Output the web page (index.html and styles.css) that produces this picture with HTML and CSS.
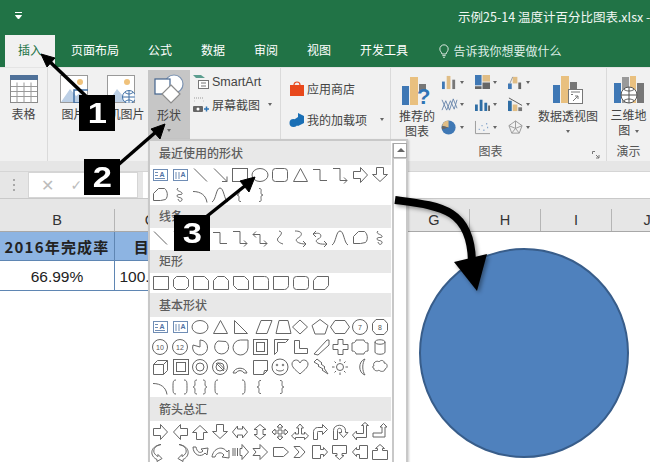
FILE: index.html
```html
<!DOCTYPE html>
<html lang="zh-CN">
<head>
<meta charset="utf-8">
<title>示例25-14 温度计百分比图表.xlsx</title>
<link rel="stylesheet" href="styles.css">
</head>
<body>
<svg class="defs" width="0" height="0">
<defs>
<g id="tb"><rect x="3.5" y="4.5" width="14" height="11" class="bl"/><text x="12" y="12" class="mini">A</text><path d="M5 7.500h3M5 10.500h3M5 13.500h10" class="bl"/></g>
<g id="vtb"><rect x="3.5" y="4.5" width="14" height="11" class="bl"/><text x="13" y="12" class="mini">A</text><path d="M6 7v7M9 7v7" class="bl"/></g>
<path id="ln" d="M4 3.500L17 16.500"/>
<path id="lna" d="M4 3.500L17 16.500M12 16.500h5v-5"/>
<path id="elb" d="M3 4.500h7v11h7"/>
<path id="elba" d="M3 3.500h7v12h7M14 12.500l3 3l-3 3"/>
<path id="elbb" d="M3 6.500h7v9h7M14 12.500l3 3l-3 3M6 3.500l-3 3l3 3"/>
<path id="cv" d="M9 3c5 1 1 5 -1 7c-2 3 2 5 5 6"/>
<path id="cva" d="M5 3c9 0 7 5 3 7c-4 2 -1 6 8 6M13 13l3 3l-3 3"/>
<path id="cvb" d="M3 6c10 -3 9 4 5 5c-4 2 -1 6 9 5M14 13l3 3l-3 3M6 3l-3 3l3 3"/>
<path id="bump" d="M2 17c4 -2 4 -14 8 -14c4 0 4 12 8 14"/>
<path id="free" d="M3.500 15.500v-7l5 -5h6c3 2 4 8 1 11l-5 1z"/>
<path id="scr" d="M8 3c-3 3 3 3 4 5c1 3 -5 0 -5 3c0 2 6 1 5 4c-1 2 -3 2 -4 -1"/>
<rect id="rc" x="3.500" y="3.500" width="15" height="13"/>
<ellipse id="el" cx="10" cy="10" rx="8" ry="6.500"/>
<rect id="rr" x="3.500" y="3.500" width="15" height="13" rx="3"/>
<path id="tri" d="M10.500 3.500L17.500 16.500H3.500z"/>
<path id="ra" d="M3.500 6.500h7v-4l7 7.500l-7 7.500v-4h-7z"/>
<path id="la" d="M17.500 6.500h-7v-4l-7 7.500l7 7.500v-4h7z"/>
<path id="ua" d="M6.500 17.500v-7h-4l7.500 -7l7.500 7h-4v7z"/>
<path id="da" d="M6.500 2.500v7h-4l7.500 7l7.500 -7h-4v-7z"/>
<path id="lbr" d="M11 3.500c-3 0 -2 1.500 -2 4c0 2 -1 2.500 -2 2.500c1 0 2 .5 2 2.500c0 2.500 -1 4 2 4"/>
<path id="rbr" d="M9 3.500c3 0 2 1.500 2 4c0 2 1 2.500 2 2.500c-1 0 -2 .5 -2 2.500c0 2.500 1 4 -2 4"/>
<path id="carc" d="M3 6.500c8 0 13 4 14 11"/>
<path id="r1" d="M3.500 3.500h15v13h-15z"/>
<path id="r2" d="M6.500 3.500h9l3 3v7l-3 3h-9l-3 -3v-7z"/>
<path id="r3" d="M3.500 3.500h11l4 4v9h-15z"/>
<path id="r4" d="M7.500 3.500h7l4 4v9h-15v-9z"/>
<path id="r5" d="M3.500 3.500h11l4 4v9h-11l-4 -4z"/>
<path id="r6" d="M3.500 3.500h11c3 0 4 2 4 4v9h-15z"/>
<path id="r7" d="M3.500 3.500h15v9c0 2 -2 4 -4 4h-11z"/>
<path id="r9" d="M7 3.500h11.500v9l-3.500 4h-11.500v-9z"/>
</defs>
</svg>

<div class="page">
  <header class="titlebar">
    <svg class="qat" viewBox="0 0 10 10"><path d="M1 1.500h7M1.500 4.500h6l-3 3.500z" class="qatp"/></svg>
    <span class="doc">示例25-14 温度计百分比图表.xlsx -</span>
  </header>

  <nav class="tabs">
    <span class="tab active">插入</span>
    <span class="tab">页面布局</span>
    <span class="tab">公式</span>
    <span class="tab">数据</span>
    <span class="tab">审阅</span>
    <span class="tab">视图</span>
    <span class="tab">开发工具</span>
    <span class="tell">
      <svg class="bulb" viewBox="0 0 12 16"><path d="M3.500 11c0-2-2.500-3-2.500-6a5 5 0 0 1 10 0c0 3-2.500 4-2.500 6zM4 13h4M5 15h2"/></svg>
      告诉我你想要做什么
    </span>
  </nav>

  <section class="ribbon">
    <div class="grp g-table">
      <div class="big">
        <svg class="ic28" viewBox="0 0 28 28">
          <rect x=".5" y=".5" width="27" height="27" fill="#fff" stroke="#8a8a8a"/>
          <rect x="0" y="0" width="28" height="5" fill="#4f7199"/>
          <path d="M7 7.500v20M14 7.500v20M21 7.500v20M1 11.500h26M1 16.500h26M1 21.500h26" stroke="#9a9a9a" fill="none"/>
        </svg>
        <span class="lbl">表格</span>
      </div>
    </div>
    <div class="grp g-pics">
      <div class="big pic">
        <svg class="ic28" viewBox="0 0 28 28">
          <rect x=".5" y=".5" width="27" height="27" fill="#fff" stroke="#9a9a9a"/>
          <circle cx="20" cy="7" r="3" fill="#f0c27b"/>
          <path d="M1 27l9-13l6 7l4-3l7 9z" fill="#bdd0e6"/>
          <rect x="14" y="15" width="16" height="13" fill="none" stroke="#3f6fa5" stroke-width="1.500"/>
        </svg>
        <span class="lbl">图片</span>
      </div>
      <div class="big pic">
        <svg class="ic28" viewBox="0 0 28 28">
          <rect x=".5" y=".5" width="27" height="27" fill="#fff" stroke="#9a9a9a"/>
          <circle cx="20" cy="7" r="3" fill="#f0c27b"/>
          <path d="M1 27l9-13l6 7l4-3l7 9z" fill="#bdd0e6"/>
          <circle cx="22" cy="22" r="6.500" fill="#fff" stroke="#3f6fa5"/>
          <path d="M15.500 22h13M22 15.500v13M18 17.500c3 2 5 2 8 0M18 26.500c3-2 5-2 8 0" fill="none" stroke="#3f6fa5"/>
        </svg>
        <span class="lbl">联机图片</span>
      </div>
    </div>
    <div class="grp g-shape">
      <div class="big">
        <svg class="ic30" viewBox="0 0 30 30">
          <circle cx="20" cy="10" r="9" fill="#fff" stroke="#7c93b2" stroke-width="1.200"/>
          <rect x="1" y="5" width="15" height="15" fill="#fff" stroke="#44648e" stroke-width="1.200"/>
          <path d="M17 11l9 9l-9 9l-9-9z" fill="#fff" stroke="#8c8c8c" stroke-width="1.200"/>
        </svg>
        <span class="lbl">形状</span>
        <span class="caret"></span>
      </div>
    </div>
    <div class="grp g-smart">
      <div class="line">
        <svg class="ic16" viewBox="0 0 16 16"><path d="M0 1h8l4 3H3z" fill="#5c9e8f"/><rect x="5.500" y="6.500" width="10" height="8" fill="#fff" stroke="#777"/><path d="M8 9h5M8 12h5" stroke="#777"/></svg>
        <span class="lbl en">SmartArt</span>
      </div>
      <div class="line">
        <svg class="ic16" viewBox="0 0 16 16"><path d="M1 1h9M1 4h.5M10 4h.5" stroke="#999" stroke-dasharray="1 1"/><rect x="0" y="9" width="10" height="6" rx="1" fill="#666"/><circle cx="5" cy="12" r="1.500" fill="#fff"/><path d="M11 12h5M13.500 9.500v5" stroke="#2f75b5" stroke-width="1.500"/></svg>
        <span class="lbl">屏幕截图</span>
        <span class="caret side"></span>
      </div>
    </div>
    <div class="grp g-add">
      <div class="line">
        <svg class="ic16" viewBox="0 0 16 16"><path d="M1 4h14v11H1z" fill="#e8481c"/><path d="M5 4c0-4 6-4 6 0" fill="none" stroke="#e8481c" stroke-width="1.200"/></svg>
        <span class="lbl">应用商店</span>
      </div>
      <div class="line">
        <svg class="ic16" viewBox="0 0 16 16"><path d="M9 1l6 3v7l-6 3l-3-1.500V7L9 5z" fill="#1a6fb5"/><circle cx="4.500" cy="11" r="4" fill="#1a6fb5"/></svg>
        <span class="lbl">我的加载项</span>
        <span class="caret side wide"></span>
      </div>
    </div>
    <div class="grp g-chart">
      <div class="chartrow">
        <div class="big rec">
          <svg class="ic30" viewBox="0 0 30 30">
            <rect x="0" y="10" width="7" height="19" fill="#3f78b5"/>
            <rect x="8" y="1" width="8" height="28" fill="#e9c07f"/>
            <rect x="17" y="8" width="7" height="7" fill="#777"/>
            <text x="15" y="28" class="qm">?</text>
          </svg>
          <span class="lbl two">推荐的<br>图表</span>
        </div>
        <div class="minis">
          <span class="m"><svg viewBox="0 0 18 16"><path d="M1 7h3v8H1z" fill="#3f78b5"/><path d="M6 1h4v14H6z" fill="#e0bd85"/><path d="M12 5h3v10h-3z" fill="#777"/></svg><i class="caret"></i></span>
          <span class="m"><svg viewBox="0 0 18 16"><path d="M1 0h7v11H1z" fill="#3f78b5"/><path d="M9 0h8v7H9z" fill="#e0bd85"/><path d="M9 8h8v7H9zM1 12h7v3H1z" fill="#666"/></svg><i class="caret"></i></span>
          <span class="m"><svg viewBox="0 0 18 16"><path d="M1 9h4v6H1z" fill="#3f78b5"/><path d="M6 2h5v7H6z" fill="#e0bd85"/><path d="M12 8h3v7h-3z" fill="#666"/><path d="M3 9l3-7" stroke="#999"/></svg><i class="caret"></i></span>
          <span class="m"><svg viewBox="0 0 18 16"><path d="M1 14l4-10l4 10l4-12l4 10M1 3l5 11l4-10l4 9l3-10" fill="none" stroke="#6b88ad"/></svg><i class="caret"></i></span>
          <span class="m"><svg viewBox="0 0 18 16"><path d="M1 8h3v7H1zM6 3h3v12H6zM11 6h3v9h-3z" fill="#2f6ea5"/><path d="M15 9h2v6h-2z" fill="#666"/></svg><i class="caret"></i></span>
          <span class="m"><svg viewBox="0 0 18 16"><path d="M1 4h4v11H1z" fill="#2f6ea5"/><path d="M6 8h5v7H6z" fill="#e0bd85"/><path d="M12 11h4v4h-4z" fill="#777"/><path d="M2 1l14 8" stroke="#555"/></svg><i class="caret"></i></span>
          <span class="m"><svg viewBox="0 0 18 16"><circle cx="8" cy="8" r="7.500" fill="#3f78b5"/><path d="M8 8V.5A7.500 7.500 0 0 0 1 6z" fill="#e0bd85"/><path d="M8 8L1 6a7.500 7.500 0 0 0 0 4z" fill="#666"/></svg><i class="caret"></i></span>
          <span class="m"><svg viewBox="0 0 18 16"><path d="M1.500 1v13.500H17" fill="none" stroke="#999"/><path d="M5 10h1M8 6h1M10 11h1M13 4h1M14 8h1" stroke="#6f96c4" stroke-width="1.500"/></svg><i class="caret"></i></span>
          <span class="m"><svg viewBox="0 0 18 16"><path d="M9 1l7 5l-3 8H5L2 6zM9 1v8M2 6l7 3l7-3M5 14l4-5l4 5" fill="none" stroke="#999"/></svg><i class="caret"></i></span>
        </div>
        <div class="big pivot">
          <svg class="ic30" viewBox="0 0 30 30">
            <rect x="0" y="10" width="7" height="18" fill="#3f78b5"/>
            <rect x="8" y="1" width="8" height="27" fill="#e9c07f"/>
            <rect x="17" y="7" width="7" height="7" fill="#777"/>
            <rect x="15.500" y="14.500" width="14" height="14" fill="#fff" stroke="#777"/>
            <path d="M18 17h9M18 19.500h2M20 26l5-5M25 24v-3h-3" fill="none" stroke="#777"/>
          </svg>
          <span class="lbl">数据透视图</span>
          <span class="caret"></span>
        </div>
      </div>
      <div class="gname"><span>图表</span><svg class="launch" viewBox="0 0 8 8"><path d="M.5 3V.5H3M4 4l3 3M7 4v3H4" fill="none" stroke="#777"/></svg></div>
    </div>
    <div class="grp g-map">
      <div class="big">
        <svg class="ic30" viewBox="0 0 30 30">
          <rect x="0" y="8" width="7" height="20" fill="#3f78b5"/>
          <rect x="8" y="2" width="7" height="26" fill="#9a9a9a"/>
          <rect x="16" y="1" width="6" height="27" fill="#e9c07f"/>
          <rect x="23" y="8" width="7" height="20" fill="#777"/>
          <circle cx="15" cy="20" r="8" fill="#fff" stroke="#555"/>
          <path d="M7 20h16M15 12v16M10 14.500c3 2 7 2 10 0M10 25.500c3-2 7-2 10 0" fill="none" stroke="#555"/>
        </svg>
        <span class="lbl two">三维地<br>图 <i class="caret inl"></i></span>
      </div>
      <div class="gname"><span>演示</span></div>
    </div>
  </section>

  <section class="fbar">
    <div class="fband"></div>
    <div class="frow">
      <div class="grip"></div>
      <div class="fbtns"><span class="x">✕</span><span class="check">✓</span><span class="fx">fx</span></div>
      <div class="finput"></div>
    </div>
  </section>

  <section class="sheet">
    <div class="hd">
      <span class="c cb">B</span><span class="c">C</span><span class="c">D</span><span class="c">E</span><span class="c">F</span><span class="c">G</span><span class="c">H</span><span class="c">I</span><span class="c">J</span>
    </div>
    <div class="r1">
      <span class="c cb bluec">2016年完成率</span><span class="c bluec">目标</span>
    </div>
    <div class="r2">
      <span class="c cb datac">66.99%</span><span class="c datac">100.00%</span>
    </div>
  </section>

  <aside class="menu">
    <div class="gallery">
      <div class="mh first">最近使用的形状</div>
      <svg class="sr" viewBox="0 0 240 20"><use href="#tb"/><use href="#vtb" x="20"/><use href="#ln" x="40"/><use href="#lna" x="60"/><use href="#rc" x="79"/><use href="#el" x="100"/><use href="#rr" x="119"/><use href="#tri" x="140"/><use href="#elb" x="160"/><use href="#elba" x="180"/><use href="#ra" x="200"/><use href="#da" x="220"/></svg>
      <svg class="sr" viewBox="0 0 240 20"><use href="#free"/><use href="#scr" x="20"/><use href="#carc" x="40"/><use href="#bump" x="60"/><use href="#lbr" x="80"/><use href="#rbr" x="100"/></svg>
      <div class="mh">线条</div>
      <svg class="sr" viewBox="0 0 240 20"><use href="#ln"/><use href="#lna" x="20"/><use href="#elb" x="60"/><use href="#elba" x="80"/><use href="#elbb" x="100"/><use href="#cv" x="120"/><use href="#cva" x="140"/><use href="#cvb" x="160"/><use href="#bump" x="180"/><use href="#free" x="200"/><use href="#scr" x="220"/></svg>
      <div class="mh spaced">矩形</div>
      <svg class="sr" viewBox="0 0 240 20"><use href="#r1"/><use href="#r2" x="20"/><use href="#r3" x="40"/><use href="#r4" x="60"/><use href="#r5" x="80"/><use href="#r6" x="100"/><use href="#r7" x="120"/><use href="#rr" x="140"/><use href="#r9" x="160"/></svg>
      <div class="mh tall">基本形状</div>
      <svg class="sr" viewBox="0 0 240 20"><use href="#tb"/><use href="#vtb" x="20"/><use href="#el" x="40"/><use href="#tri" x="60"/><path d="M84.500 3.500L97.500 16.500H84.500z"/><path d="M106 16.500l5-13h11l-5 13z"/><path d="M129 3.500h9l3 13h-15z"/><path d="M150 3l7.500 7l-7.500 7l-7.500-7z"/><path d="M170 2.500l8 6l-3 8.500h-10l-3-8.500z"/><path d="M185 3.500h10l4.500 6.500l-4.500 6.500h-10l-4.500-6.500z"/><circle cx="210" cy="10" r="7.500"/><text x="210" y="13" class="num">7</text><path d="M226 2.500h8l3.500 4v7l-3.500 4h-8l-3.500-4v-7z"/><text x="230" y="13" class="num">8</text></svg>
      <svg class="sr" viewBox="0 0 240 20"><circle cx="10" cy="10" r="7.500"/><text x="10" y="13" class="num">10</text><circle cx="30" cy="10" r="7.500"/><text x="30" y="13" class="num">12</text><path d="M50 10V3a7.500 7.500 0 1 1-7 5z"/><path d="M68 4l8 .5a7 7 0 1 1-8-.5z"/><path d="M98 3v8a7.500 7.500 0 1 1-7.500-8z"/><rect x="103.500" y="2.500" width="14" height="15"/><rect x="106.500" y="5.500" width="8" height="9"/><path d="M124.500 17.500v-15h14l-3 3h-8v9z"/><path d="M144.500 3.500h5v8h8v5h-13z"/><path d="M164 17l13-14h2v5l-11 10z"/><path d="M188 2.500h5v5h5v5h-5v5h-5v-5h-5v-5h5z"/><path d="M206 3h8c0 2 2 3 4 3v8c-2 0-4 1-4 3h-8c0-2-2-3-4-3v-8c2 0 4-1 4-3z"/><path d="M225 5v10c0 3 10 3 10 0V5c0-3-10-3-10 0c0 3 10 3 10 0"/></svg>
      <svg class="sr" viewBox="0 0 240 20"><path d="M3.500 7.500l4-4h10v10l-4 4h-10zM3.500 7.500h10v10M13.500 7.500l4-4"/><rect x="23.500" y="2.500" width="15" height="15"/><rect x="26.500" y="5.500" width="9" height="9"/><circle cx="50" cy="10" r="7.500"/><circle cx="50" cy="10" r="4"/><circle cx="70" cy="10" r="7.500"/><circle cx="70" cy="10" r="4"/><path d="M66 6l8 8M67.500 5l7.500 7.500"/><path d="M83 16a7.500 7.500 0 0 1 14 0h-3a4.500 4.500 0 0 0-8 0z"/><path d="M103.500 3.500h14v10l-4 4h-10zM113.500 17.500l1-4h3"/><circle cx="130" cy="10" r="8"/><circle cx="127" cy="8" r=".8"/><circle cx="133" cy="8" r=".8"/><path d="M126 12.500c2 2 6 2 8 0"/><path d="M150 6c-2-5-8-3-8 1c0 4 5 7 8 10c3-3 8-6 8-10c0-4-6-6-8-1z"/><path d="M167 2l5 4l-1 1l4 3l-1 1l4 6l-6-4l1-1l-5-3l1-1l-5-3z"/><circle cx="190" cy="10" r="3.500"/><path d="M190 2v2.500M190 15.500v2.500M182 10h2.500M195.500 10h2.500M184.500 4.500l1.500 1.500M194 14l1.500 1.500M184.500 15.500l1.500-1.500M194 6l1.500-1.500"/><path d="M215 2c-7 2-7 14 0 16c-3-4-3-12 0-16z"/><path d="M224 9c-2-4 4-6 5-4c2-3 6-1 5 1c4 0 4 5 1 6c0 3-5 3-6 1c-2 2-6 0-5-2c-2 0-2-2 0-2z"/></svg>
      <svg class="sr" viewBox="0 0 240 20"><use href="#carc"/><path d="M26 3c-3 0-3 2-3 7s0 7 3 7M34 3c3 0 3 2 3 7s0 7-3 7"/><path d="M47 3c-3 0-2 2-2 4c0 2-1 3-2 3c1 0 2 1 2 3c0 2-1 4 2 4M53 3c3 0 2 2 2 4c0 2 1 3 2 3c-1 0-2 1-2 3c0 2 1 4-2 4"/><path d="M68 3c-3 0-3 2-3 7s0 7 3 7"/><path d="M92 3c3 0 3 2 3 7s0 7-3 7"/><use href="#lbr" x="100"/><use href="#rbr" x="121"/></svg>
      <div class="mh arrows">箭头总汇</div>
      <svg class="sr" viewBox="0 0 240 20"><use href="#ra"/><use href="#la" x="20"/><use href="#ua" x="40"/><use href="#da" x="60"/><path d="M82.500 10l5-6v3h5v-3l5 6l-5 6v-3h-5v3z"/><path d="M110 2.500l6 5h-3v5h3l-6 5l-6-5h3v-5h-3z"/><path d="M130 2l3 3h-2v4h4v-2l3 3l-3 3v-2h-4v4h2l-3 3l-3-3h2v-4h-4v2l-3-3l3-3v2h4v-4h-2z"/><path d="M150 2l3.500 4h-2v6h3v-2l4 4l-4 3.500v-2h-9v2l-4-3.500l4-4v2h3v-6h-2z"/><path d="M163.500 17.500v-8c0-2 2-4 4-4h5v-3l5 5l-5 5v-3h-4c-1 0-1 0-1 1v7z"/><path d="M183.500 17.500v-9c0-7 12-7 12 0v2h2.500l-4.500 5l-4.500-5h2.500v-2c0-3-4-3-4 0v9z"/><path d="M202.500 13l4-4v2.500h7v-8h-2l3.500-3l3.500 3h-2v12h-10v2.500z"/><path d="M223 11h9v-6h-2l3.500-3.500l3.500 3.500h-2v10h-12z"/></svg>
      <svg class="sr" viewBox="0 0 240 20"><path d="M11 2.500c-5 1-8 4-7 8c1 2 2 3 4 4v-2l4 4l-5 3v-2c-7-3-8-13 4-15z"/><path d="M29 2.500c5 1 8 4 7 8c-1 2-2 3-4 4v-2l-4 4l5 3v-2c7-3 8-13-4-15z"/><path d="M43 5c0 8 8 11 12 6l2 2l1-7l-7 1l2 2c-3 3-6 1-7-4z"/><path d="M62 15c1-9 11-12 15-5l2-2v8l-7-1l2-2c-3-4-8-2-9 2z"/><path d="M83 6v8M85 6v8M87.500 6v8M90 6.500h2v-4l6.500 7.500l-6.500 7.500v-4h-2z"/><path d="M103 6.500h7v-4l7.500 7.500l-7.500 7.500v-4h-7l3-3.500z"/><path d="M123.500 5.500h10l5 4.500l-5 4.500h-10z"/><path d="M144 4.500h6l5 5.500l-5 5.500h-6l5-5.500z"/><path d="M162.500 3.500h8v4h3v-2l4 4.500l-4 4.500v-2h-3v4h-8z"/><path d="M182.500 3.500h14v8h-4.500v2h2l-4.500 4l-4.500-4h2v-2h-4.500z"/><path d="M217.500 3.500h-8v4h-3v-2l-4 4.500l4 4.500v-2h3v4h8z"/><path d="M222.500 8.500h5v-2h-2l4.500-4l4.500 4h-2v2h5v9h-15z"/></svg>
    </div>
    <div class="scroll"><div class="sbtn"></div><div class="sthumb"></div></div>
  </aside>

  <div class="circle"></div>

  <svg class="ann" viewBox="0 0 650 462">
    <defs>
      <filter id="sh" x="-20%" y="-20%" width="140%" height="140%"><feDropShadow dx="2" dy="2" stdDeviation="2" flood-color="#000" flood-opacity=".4"/></filter>
    </defs>
    <g class="thin">
      <path d="M90 100L48 60"/><path d="M41 54l14 4l-8 9z" class="head"/>
      <path d="M118 165L157 131"/><path d="M165 124l-5 15l-9-10z" class="head"/>
      <path d="M206 217L246 185"/><path d="M255 177l-6 15l-9-11z" class="head"/>
    </g>
    <g filter="url(#sh)">
      <path d="M395 200C440 206 471 208 472 262" class="thick"/>
      <path d="M454 262L487 254L477 291z"/>
    </g>
  </svg>

  <div class="badge b1"><span>1</span></div>
  <div class="badge b2"><span>2</span></div>
  <div class="badge b3"><span>3</span></div>
</div>
</body>
</html>
```
FILE: styles.css
```css
* { box-sizing: border-box; }
html, body { margin: 0; padding: 0; }
body { font-family: "Noto Sans CJK SC", "Liberation Sans", sans-serif; font-size: 12px; color: #444; }
.defs { position: absolute; }
.page { width: 650px; height: 462px; position: relative; overflow: hidden; background: #fff; }

.titlebar { height: 35px; background: #217346; display: flex; align-items: center; justify-content: space-between; padding: 0 0 3px 14px; color: #fff; }
.qat { width: 10px; height: 10px; }
.qatp { fill: #fff; stroke: #fff; }
.doc { font-size: 12.5px; white-space: nowrap; width: 192px; overflow: hidden; color: #f2f7f4; }

.tabs { height: 32px; background: #217346; display: flex; padding-left: 3.5px; color: #fff; line-height: 30px; }
.tab { padding: 0 14.5px; }
.tab.active { background: #f1f1f1; color: #217346; padding: 0 13px; margin: 0 1.5px; }
.tell { display: flex; align-items: center; margin-left: 16px; gap: 5px; color: #dfeee6; }
.bulb { width: 10px; height: 15px; fill: none; stroke: #fff; }

.ribbon { height: 94px; background: #f1f1f1; display: flex; border-top: 1px solid #e4e4e4; color: #444; }
.grp { position: relative; padding-top: 2px; }
.g-table, .g-smart, .g-add, .g-chart { border-right: 1px solid #dadada; }
.g-table { width: 48px; }
.g-pics { width: 100px; display: flex; padding-left: 2px; }
.g-shape { width: 42px; }
.g-smart { width: 91px; padding-left: 3px; padding-top: 2px; }
.g-add { width: 110px; padding-left: 8px; padding-top: 5px; }
.g-chart { width: 216px; display: flex; flex-direction: column; }
.g-map { width: 43px; }
.big { display: flex; flex-direction: column; align-items: center; height: 72px; padding-top: 5px; }
.big .lbl { margin-top: 2px; line-height: 17px; text-align: center; white-space: nowrap; }
.big .lbl.two { line-height: 15px; margin-top: 2px; }
.pic { width: 47px; flex: none; padding-top: 5px; }
.g-shape .big { background: #c6c6c6; height: 70px; padding-top: 4px; }
.ic28 { width: 28px; height: 28px; display: block; }
.ic30 { width: 30px; height: 30px; display: block; flex: none; }
.ic16 { width: 16px; height: 16px; flex: none; }
.line { display: flex; align-items: center; gap: 3px; height: 23px; white-space: nowrap; }
.g-add .line { height: 31px; gap: 2px; }
.lbl.en { font-family: "Liberation Sans", sans-serif; font-size: 12.5px; }
.caret { display: block; width: 0; height: 0; border: 2.5px solid transparent; border-top: 3px solid #666; border-bottom: 0; margin-top: 6px; }
.caret.side { margin: 0 0 0 5px; }
.caret.wide { margin-left: 11px; }
.caret.inl { display: inline-block; vertical-align: middle; margin: 0 0 0 2px; }

.chartrow { display: flex; height: 72px; }
.rec { width: 50px; padding-left: 2px; padding-top: 6px; flex: none; }
.qm { font: bold 22px "Liberation Sans", sans-serif; fill: #2f75b5; }
.minis { width: 97px; flex: none; display: grid; grid-template-columns: repeat(3, 33px); grid-auto-rows: 22.5px; padding-top: 1px; }
.m { display: flex; align-items: center; gap: 2px; }
.m svg { width: 17px; height: 15px; flex: none; }
.m .caret { margin-top: 0; }
.pivot { flex: 1; padding-top: 5px; padding-right: 8px; }
.pivot .lbl { margin-top: 2px; }
.gname { display: flex; justify-content: center; position: absolute; left: 0; right: 0; top: 75px; line-height: 15px; color: #555; }
.g-chart .gname { padding-right: 16px; }
.launch { position: absolute; right: 6px; top: 8px; width: 8px; height: 8px; }

.fbar { height: 38px; background: #ededed; }
.fband { height: 10px; background: #e6e6e6; }
.frow { height: 28px; display: flex; background: #fff; border-bottom: 1px solid #c9c9c9; border-top: 1px solid #d5d5d5; }
.grip { width: 28px; background: #e6e6e6; display: flex; align-items: center; justify-content: center; }
.grip::after { content: ""; width: 2px; height: 12px; background: repeating-linear-gradient(#a8a8a8 0 2px, transparent 2px 5px); }
.fbtns { width: 110px; background: #fff; border: 1px solid #d5d5d5; display: flex; align-items: center; padding-left: 12px; gap: 16px; font-family: "DejaVu Sans", sans-serif; }
.x { color: #bcbcbc; font-size: 16px; }
.check { color: #bcbcbc; font-size: 14px; }
.fx { color: #888; font-style: italic; font-family: "Liberation Serif", serif; }
.finput { width: 5px; background: #e6e6e6; }

.sheet { overflow: hidden; }
.hd { height: 33px; padding-top: 10px; background: #e6e6e6; border-bottom: 1px solid #a8a8a8; display: flex; font: 14.5px/22px "Liberation Sans", sans-serif; color: #333; }
.hd .c { border-right: 1px solid #b5b5b5; }
.c { width: 71px; flex: none; text-align: center; }
.cb { width: 115px; }
.r1, .r2 { display: flex; white-space: nowrap; }
.r1 { height: 29px; line-height: 30px; font-weight: 700; font-size: 15px; letter-spacing: 1.2px; color: #222; }
.bluec { background: #8db4e2; border-right: 1px solid #5f86b3; border-bottom: 1px solid #5f86b3; }
.r2 { height: 30px; font: 15.5px/31px "Liberation Sans", sans-serif; color: #222; }
.datac { border-right: 1px solid #5f86b3; border-bottom: 1px solid #5f86b3; }

.menu { position: absolute; left: 148px; top: 139px; width: 260px; height: 330px; background: #fff; border: 2px solid #c8c8c8; display: flex; box-shadow: 1px 1px 2px rgba(0,0,0,.2); }
.gallery { width: 241px; flex: none; }
.mh { height: 23px; background: #e8e8e8; padding-left: 9px; font-weight: 500; font-size: 12px; line-height: 22px; color: #5d5d5d; }
.mh.first { height: 24px; line-height: 23px; }
.mh.spaced { margin-top: 2px; }
.mh.tall { height: 24px; line-height: 23px; }
.mh.arrows { height: 24px; margin-bottom: 1px; line-height: 23px; }
.sr { display: block; width: 240px; height: 20px; fill: #fff; stroke: #666; stroke-width: 1; }
.sr path, .sr use, .sr rect, .sr circle, .sr ellipse { fill: none; }
.bl { stroke: #6f8db5; fill: none; }
.mini { font: 700 7px "Liberation Sans", sans-serif; fill: #4f72a5; stroke: none; text-anchor: middle; }
.num { font: 7px "Liberation Sans", sans-serif; fill: #555; stroke: none; text-anchor: middle; }
.scroll { width: 15px; margin: 2px 0 0 1px; border-left: 1px solid #c8c8c8; display: flex; flex-direction: column; flex: none; }
.sbtn { height: 15px; border: 1px solid #a8a8a8; position: relative; background: #fff; }
.sbtn::after { content: ""; position: absolute; left: 3px; top: 4px; border: 4px solid transparent; border-bottom: 4px solid #666; border-top: 0; }
.sthumb { flex: 1; background: #fff; border: 1px solid #c8c8c8; }

.circle { position: absolute; left: 419px; top: 248px; width: 210px; height: 210px; border-radius: 50%; background: #4f81bd; border: 2px solid #385d8a; }

.ann { position: absolute; inset: 0; width: 650px; height: 462px; }
.thin path { stroke: #000; stroke-width: 3.500; fill: none; }
.thin .head { fill: #000; stroke-width: 1; }
.thick { stroke: #000; stroke-width: 8; fill: none; }

.badge { position: absolute; width: 36px; height: 36px; background: #000; color: #fff; font: 700 30px/36px "Liberation Sans", sans-serif; text-align: center; }
.badge span { display: inline-block; transform: scaleX(1.15); }
.b1 { left: 79px; top: 95px; }
.b2 { left: 84px; top: 159px; }
.b3 { left: 174px; top: 215px; }
```
